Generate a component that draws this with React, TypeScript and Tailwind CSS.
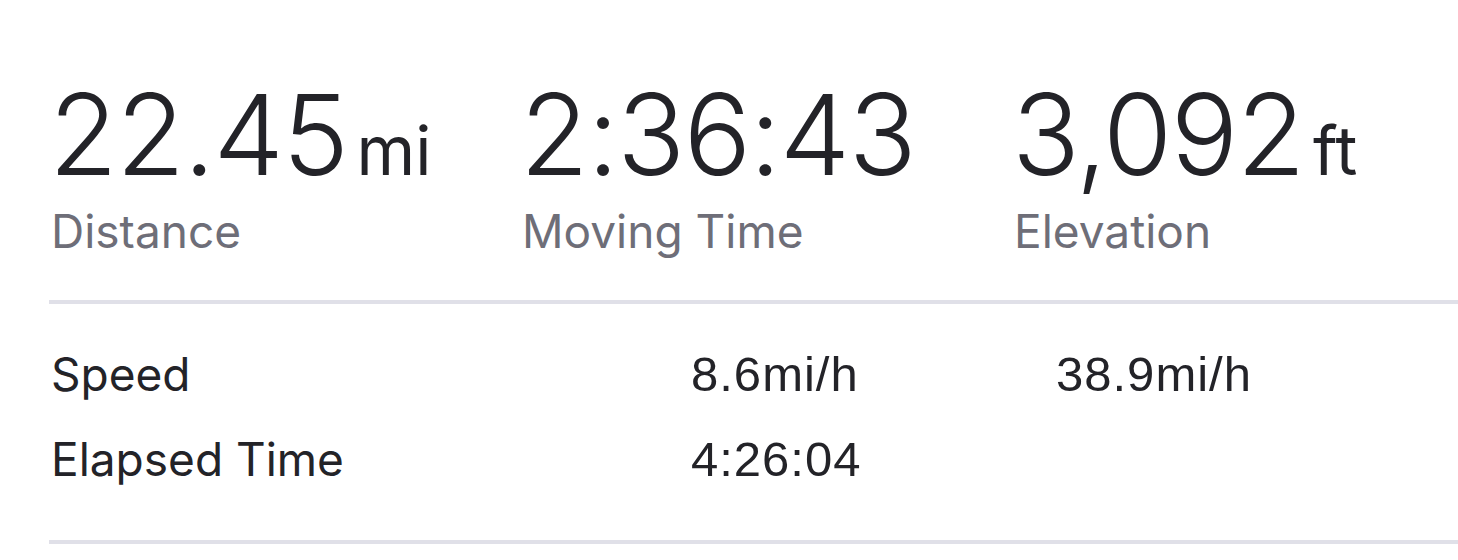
import React from 'react';

const stats = [
  { value: '22.45', unit: 'mi', label: 'Distance' },
  { value: '2:36:43', unit: '', label: 'Moving Time' },
  { value: '3,092', unit: 'ft', label: 'Elevation' },
];

const rows = [
  { label: 'Speed', avg: '8.6', max: '38.9', unit: 'mi/h' },
  { label: 'Elapsed Time', avg: '4:26:04', max: '', unit: '' },
];

export default function App() {
  return (
    <div className="min-h-[560px] bg-white pl-[49px] pt-[76px] font-['Inter',sans-serif] text-[#232328]">
      <div className="grid grid-cols-[471px_492px_1fr]">
        {stats.map((s) => (
          <div key={s.label}>
            <div className="flex h-[116px] items-baseline leading-[116px]">
              <span className="text-[112px] font-light tracking-[-1.5px]">{s.value}</span>
              {s.unit && <span className="ml-[9px] text-[67px]">{s.unit}</span>}
            </div>
            <div className="mt-[11px] pl-[2px] text-[46px] leading-[56px] text-[#6e6e78]">{s.label}</div>
          </div>
        ))}
      </div>

      <div className="mt-[41px] h-[4px] bg-[#e0e0e8]" />

      <div className="pt-[28px] pb-[38px] pl-[2px]">
        {rows.map((r) => (
          <div key={r.label} className="grid grid-cols-[640px_365px_1fr] items-center leading-[85px]">
            <span className="text-[46px]">{r.label}</span>
            <span className="font-['Liberation_Sans',sans-serif] text-[49px] tracking-[1px]">
              {r.avg}
              {r.unit}
            </span>
            <span className="font-['Liberation_Sans',sans-serif] text-[49px] tracking-[1px]">
              {r.max}
              {r.max && r.unit}
            </span>
          </div>
        ))}
      </div>

      <div className="h-[4px] bg-[#e0e0e8]" />
    </div>
  );
}
